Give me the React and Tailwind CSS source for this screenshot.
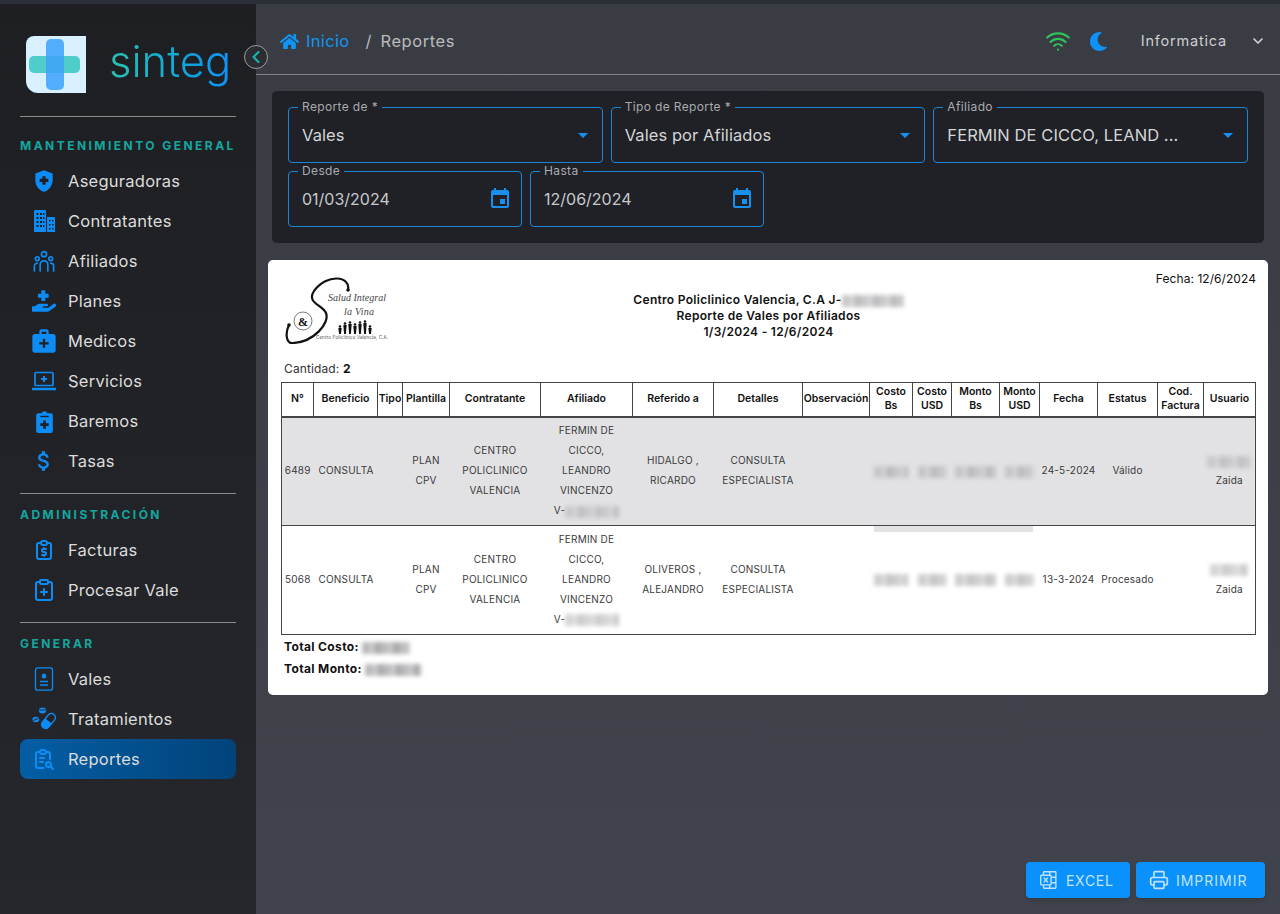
import { ChevronDown, ChevronLeft, ClipboardPlus, Printer, Wifi } from 'lucide-react';
import { FaHandHoldingMedical, FaHome, FaMoon } from 'react-icons/fa';
import { MdArrowDropDown, MdAttachMoney, MdEvent, MdHealthAndSafety, MdMedicalServices } from 'react-icons/md';
import { PiMicrosoftExcelLogo } from 'react-icons/pi';
import { TbReportMoney, TbReportSearch } from 'react-icons/tb';

const ContratantesIcon = ({ className }) => (
  <svg viewBox="0 0 24 24" className={className} fill="currentColor">
    <path d="M2 2a1 1 0 0 1 1-1h10a1 1 0 0 1 1 1v21H2z" />
    <path d="M15 8h7a1 1 0 0 1 1 1v14h-8z" />
    <path
      d="M4.5 4h2v2h-2zM8 4h2v2H8zM11 4h1.500v2H11zM4.500 8h2v2h-2zM8 8h2v2H8zM11 8h1.500v2H11zM4.500 12h2v2h-2zM8 12h2v2H8zM11 12h1.500v2H11zM4.500 16h2v2h-2zM8 16h2v2H8zM11 16h1.500v2H11zM17 11h1.500v1.500H17zM20 11h1.500v1.500H20zM17 15h1.500v1.500H17zM20 15h1.500v1.500H20zM17 19h1.500v1.500H17zM20 19h1.500v1.500H20z"
      fill="#1f2126"
    />
  </svg>
);

const AfiliadosIcon = ({ className }) => (
  <svg viewBox="0 0 24 24" className={className} fill="none" stroke="currentColor" strokeWidth="1.8" strokeLinecap="round">
    <circle cx="12" cy="4.500" r="2.800" />
    <circle cx="4.700" cy="9.500" r="2.100" />
    <circle cx="19.300" cy="9.500" r="2.100" />
    <path d="M7.800 23v-7a4.200 4.200 0 0 1 8.400 0v7" />
    <path d="M1.500 23v-5.500a3.200 3.200 0 0 1 3.200-3.200" />
    <path d="M22.500 23v-5.500a3.200 3.200 0 0 0-3.200-3.200" />
  </svg>
);

const ServiciosIcon = ({ className }) => (
  <svg viewBox="0 0 24 24" className={className} fill="none" stroke="currentColor" strokeWidth="1.7">
    <rect x="3" y="3.500" width="18" height="13" rx="1" />
    <path d="M12 7v6M9 10h6" strokeWidth="2" />
    <path d="M0.500 20h23" strokeWidth="2.400" strokeLinecap="round" />
  </svg>
);

const BaremosIcon = ({ className }) => (
  <svg viewBox="0 0 24 24" className={className} fill="currentColor">
    <path d="M6 4h3.200a3 3 0 0 1 5.600 0H18a2 2 0 0 1 2 2v15a2 2 0 0 1-2 2H6a2 2 0 0 1-2-2V6a2 2 0 0 1 2-2z" />
    <path d="M8 7.200h8" stroke="#1f2126" strokeWidth="1.400" />
    <path d="M12 11v8M8 15h8" stroke="#1f2126" strokeWidth="2.600" />
  </svg>
);

const ValesIcon = ({ className }) => (
  <svg viewBox="0 0 24 24" className={className} fill="none" stroke="currentColor" strokeWidth="1.300">
    <rect x="3.500" y="0.800" width="17" height="22.400" rx="2.200" />
    <path d="M12 6.500v5M9.800 7.700l4.400 2.600M14.200 7.700l-4.400 2.600" strokeWidth="1.500" />
    <path d="M8 14.500h8M8 18h8" strokeWidth="1.500" />
  </svg>
);

const PillsIcon = ({ className }) => (
  <svg viewBox="0 0 24 24" className={className} fill="currentColor">
    <g transform="rotate(-50 16.500 14)">
      <rect x="8" y="10" width="17" height="8" rx="4" fill="none" stroke="currentColor" strokeWidth="1.400" />
      <path d="M16.500 10H12a4 4 0 0 0 0 8h4.500z" />
    </g>
    <ellipse cx="10.500" cy="3.500" rx="3.600" ry="3" />
    <path d="M7.300 3h6.400" stroke="#1f2126" strokeWidth="0.900" />
    <ellipse cx="3.800" cy="12.500" rx="3.400" ry="2.800" />
    <path d="M1 13.500l5.500-2" stroke="#1f2126" strokeWidth="0.900" />
  </svg>
);

const Logo = () => (
  <svg viewBox="0 0 60 57" className="w-[60px] h-[57px] shrink-0">
    <path d="M8 0h52v57H12a12 12 0 0 1-12-12V8a8 8 0 0 1 8-8z" fill="#d8f0ff" />
    <rect x="20" y="3" width="18" height="51" rx="5" fill="#52adfd" />
    <rect x="3" y="20" width="51" height="17" rx="5" fill="#4fcdcb" />
    <rect x="20" y="20" width="18" height="17" fill="#3fa8f0" />
  </svg>
);

const Person = ({ x, h }) => (
  <g fill="#111">
    <circle cx={x} cy={56.500 - h} r="1.300" />
    <path d={`M${x - 1.700} ${58 - h}h3.400l-0.800 ${h}h-1.800z`} />
  </g>
);

const ReportLogo = () => (
  <svg viewBox="0 0 103 68" className="w-[103px] h-[68px]">
    <path d="M63 14C66 0 42-3 29 15c-8 12 9 14 12 22 4 10-12 29-33 30C1 68 0 57 4 49" fill="none" stroke="#111" strokeWidth="2.200" />
    <circle cx="63" cy="14" r="1.800" fill="#111" />
    <circle cx="4" cy="49" r="1.800" fill="#111" />
    <circle cx="18" cy="45" r="9" fill="none" stroke="#222" strokeWidth="0.600" />
    <text x="18" y="49.500" textAnchor="middle" fontSize="12" fontWeight="700" fill="#111" fontFamily="Liberation Serif, serif">&amp;</text>
    <text x="43" y="25" fontSize="10" fontStyle="italic" fill="#444" fontFamily="Liberation Serif, serif" textLength="58">Salud Integral</text>
    <text x="59" y="39" fontSize="10" fontStyle="italic" fill="#444" fontFamily="Liberation Serif, serif" textLength="30">la Vina</text>
    {[[55, 6], [60, 9], [65, 10], [70, 8], [75, 10], [80, 11], [85, 6]].map(([x, h]) => (
      <Person key={x} x={x} h={h} />
    ))}
    <text x="31" y="63" fontSize="4.400" fill="#444" fontFamily="Inter, sans-serif" textLength="72">Centro Policlinico Valencia, C.A.</text>
  </svg>
);

const sections = [
  {
    title: 'MANTENIMIENTO GENERAL',
    items: [
      { label: 'Aseguradoras', icon: MdHealthAndSafety, size: 'w-[26px] h-[26px]' },
      { label: 'Contratantes', icon: ContratantesIcon, size: 'w-[24px] h-[24px]' },
      { label: 'Afiliados', icon: AfiliadosIcon, size: 'w-[22px] h-[22px]' },
      { label: 'Planes', icon: FaHandHoldingMedical, size: 'w-[24px] h-[24px]' },
      { label: 'Medicos', icon: MdMedicalServices, size: 'w-[28px] h-[28px]' },
      { label: 'Servicios', icon: ServiciosIcon, size: 'w-[24px] h-[24px]' },
      { label: 'Baremos', icon: BaremosIcon, size: 'w-[25px] h-[25px]' },
      { label: 'Tasas', icon: MdAttachMoney, size: 'w-[26px] h-[26px]' },
    ],
  },
  {
    title: 'ADMINISTRACIÓN',
    items: [
      { label: 'Facturas', icon: TbReportMoney, size: 'w-[24px] h-[24px]' },
      { label: 'Procesar Vale', icon: ClipboardPlus, size: 'w-[24px] h-[24px]' },
    ],
  },
  {
    title: 'GENERAR',
    items: [
      { label: 'Vales', icon: ValesIcon, size: 'w-[24px] h-[24px]' },
      { label: 'Tratamientos', icon: PillsIcon, size: 'w-[24px] h-[24px]' },
      { label: 'Reportes', icon: TbReportSearch, size: 'w-[24px] h-[24px]', active: true },
    ],
  },
];

const Sidebar = () => (
  <aside className="w-[256px] shrink-0 px-5 bg-gradient-to-b from-[#1e1f23] to-[#25272c]">
    <div className="flex items-center h-[113px] pl-[6px] pt-[8px] border-b border-[#8b8b8b]">
      <Logo />
      <span className="ml-[23px] pb-[4px] text-[43.500px] leading-none font-light text-transparent bg-clip-text bg-gradient-to-r from-[#2cc0ae] to-[#1190f5]">
        sinteg
      </span>
    </div>
    {sections.map((section, i) => (
      <div key={section.title} className={i < 2 ? 'border-b border-[#8b8b8b] pb-3' : ''}>
        <div className={`${i === 0 ? 'mt-[21px]' : 'mt-[13px]'} mb-[7px] h-4 text-[12px] leading-4 font-bold tracking-[0.205em] text-[#14a79f]`}>
          {section.title}
        </div>
        {section.items.map((item) => (
          <div
            key={item.label}
            className={`flex items-center h-10 rounded-lg ${item.active ? 'bg-gradient-to-r from-[#045ea4] to-[#02437a]' : ''}`}
          >
            <span className="w-[48px] flex justify-center text-[#0d8cf5]">
              <item.icon className={item.size} />
            </span>
            <span className="text-[16.500px] tracking-[0.015em] text-[#dcdcdc]">{item.label}</span>
          </div>
        ))}
      </div>
    ))}
  </aside>
);

const Field = ({ label, children }) => (
  <div className="relative h-14 flex items-center justify-between pl-[13px] pr-[12px] border border-[#1a86d8] rounded-[4px]">
    <span className="absolute -top-[8px] left-[9px] px-[4px] bg-[#1f2126] text-[12px] leading-[14px] tracking-[0.03em] text-[#a9abae]">
      {label}
    </span>
    {children}
  </div>
);

const SelectField = ({ label, value }) => (
  <Field label={label}>
    <span className="text-[16.500px] tracking-[0.005em] text-[#d4d5d7] whitespace-nowrap">{value}</span>
    <MdArrowDropDown className="w-6 h-6 -mr-[5px] text-[#1a90ee]" />
  </Field>
);

const DateField = ({ label, value }) => (
  <Field label={label}>
    <span className="text-[16px] text-[#c8c9cc]">{value}</span>
    <MdEvent className="w-[24px] h-[24px] -mr-[3px] text-[#1a90ee]" />
  </Field>
);

const Blur = ({ w, className = '' }) => (
  <span
    className={`inline-block h-[12px] align-middle blur-[2px] bg-[repeating-linear-gradient(90deg,#b9b9bb_0px,#b9b9bb_7px,#c8c8ca_7px,#c8c8ca_13px,#a9a9ab_13px,#a9a9ab_18px)] ${className}`}
    style={{ width: w }}
  />
);

const headers = [
  ['N°', 'w-[32px]'],
  ['Beneficio', 'w-[64px]'],
  ['Tipo', 'w-[25px]'],
  ['Plantilla', 'w-[47px]'],
  ['Contratante', 'w-[91px]'],
  ['Afiliado', 'w-[92px]'],
  ['Referido a', 'w-[81px]'],
  ['Detalles', 'w-[89px]'],
  ['Observación', 'w-[67px]'],
  ['Costo Bs', 'w-[43px]'],
  ['Costo USD', 'w-[39px]'],
  ['Monto Bs', 'w-[48px]'],
  ['Monto USD', 'w-[40px]'],
  ['Fecha', 'w-[58px]'],
  ['Estatus', 'w-[60px]'],
  ['Cod. Factura', 'w-[46px]'],
  ['Usuario', 'w-[52px]'],
];

const rows = [
  {
    id: '6489', refer: ['HIDALGO ,', 'RICARDO'], fecha: '24-5-2024', estatus: 'Válido', shade: true,
    blurs: [34, 29, 41, 29], user: 44,
  },
  {
    id: '5068', refer: ['OLIVEROS ,', 'ALEJANDRO'], fecha: '13-3-2024', estatus: 'Procesado', shade: false,
    blurs: [34, 29, 41, 29], user: 38,
  },
];

const Lines = ({ lines }) => lines.map((line) => <div key={line}>{line}</div>);

const ReportTable = () => (
  <div className="relative">
    <table className="table-fixed border-collapse w-[974px] text-[10px] leading-[20px] tracking-[0.02em] text-[#3a3a3a] text-center">
      <thead>
        <tr className="h-[34px] border-b-2 border-[#444]">
          {headers.map(([name, width]) => (
            <th key={name} className={`${width} border border-[#444] p-0 text-[10.500px] leading-[14px] tracking-normal font-semibold text-[#111]`}>
              {name}
            </th>
          ))}
        </tr>
      </thead>
      <tbody>
        {rows.map((row) => (
          <tr key={row.id} className={`h-[109px] border border-[#444] [&>td]:pb-[2px] ${row.shade ? 'bg-[#e2e2e4]' : ''}`}>
            <td>{row.id}</td>
            <td className="text-left pl-[5px]">CONSULTA</td>
            <td />
            <td><Lines lines={['PLAN', 'CPV']} /></td>
            <td><Lines lines={['CENTRO', 'POLICLINICO', 'VALENCIA']} /></td>
            <td>
              <Lines lines={['FERMIN DE', 'CICCO,', 'LEANDRO', 'VINCENZO']} />
              <div>V-<Blur w={54} className="opacity-60" /></div>
            </td>
            <td><Lines lines={row.refer} /></td>
            <td><Lines lines={['CONSULTA', 'ESPECIALISTA']} /></td>
            <td />
            {row.blurs.map((w, i) => (
              <td key={i} className="overflow-hidden"><Blur w={w} className="opacity-70" /></td>
            ))}
            <td className="whitespace-nowrap">{row.fecha}</td>
            <td className="whitespace-nowrap">{row.estatus}</td>
            <td />
            <td>
              <div><Blur w={row.user} className="opacity-60" /></div>
              <div>Zaida</div>
            </td>
          </tr>
        ))}
      </tbody>
    </table>
    <div className="absolute left-[593px] top-[144px] w-[159px] h-[6px] bg-[#e2e2e4]" />
  </div>
);

const Report = () => (
  <section className="mx-3 mt-[17px] h-[435px] bg-white rounded-[5px] pl-[13px] pr-3 pt-[16px] text-[#111]">
    <div className="grid grid-cols-[1fr_auto_1fr] h-[86px]">
      <div className="pl-[4px]"><ReportLogo /></div>
      <div className="pt-[16px] text-center text-[12px] leading-[16px] font-semibold tracking-[0.025em]">
        <div>
          Centro Policlinico Valencia, C.A J-<Blur w={62} className="opacity-80" />
        </div>
        <div>Reporte de Vales por Afiliados</div>
        <div>1/3/2024 - 12/6/2024</div>
      </div>
      <div className="-mt-[4px] text-right text-[12px] leading-[14px] tracking-[0.005em]">Fecha: 12/6/2024</div>
    </div>
    <div className="h-[20px] pl-[3px] text-[12px] leading-[14px] tracking-[0.01em] text-[#333]">
      Cantidad: <b className="text-[#111]">2</b>
    </div>
    <ReportTable />
    <div className="pl-[3px] pt-[1px] text-[12px] leading-[22px] font-bold tracking-[0.03em]">
      <div>Total Costo: <Blur w={48} /></div>
      <div>Total Monto: <Blur w={56} /></div>
    </div>
  </section>
);

const App = () => (
  <div className="flex flex-col h-[914px] overflow-hidden [font-family:Inter,sans-serif]">
    <div className="h-1 bg-[#2b3038]" />
    <div className="relative flex flex-1 min-h-0">
      <Sidebar />
      <button className="absolute left-[244px] top-[41px] w-6 h-6 flex items-center justify-center rounded-full border border-[#9b9d9f] bg-[#2b2d33] text-[#18b6ad]">
        <ChevronLeft className="w-5 h-5" strokeWidth={2.5} />
      </button>
      <main className="flex-1 flex flex-col min-w-0 bg-gradient-to-b from-[#393c43] to-[#41434c]">
        <header className="h-[71px] shrink-0 flex items-center pt-[4px] pl-6 pr-[14px] border-b border-[#85878a]">
          <FaHome className="w-[19px] h-[19px] text-[#1195f5]" />
          <span className="ml-[7px] text-[16.500px] tracking-[0.02em] text-[#1195f5]">Inicio</span>
          <span className="ml-[16px] text-[16.500px] text-[#b9bbbe]">/</span>
          <span className="ml-[9px] text-[16.500px] tracking-[0.035em] text-[#b9bbbe]">Reportes</span>
          <Wifi className="ml-auto w-[26px] h-[26px] text-[#2fc25b]" strokeWidth={2} />
          <FaMoon className="ml-[18px] w-[19px] h-[19px] text-[#0d92f8]" />
          <span className="ml-[33px] text-[14.500px] tracking-[0.055em] text-[#cdced0]">Informatica</span>
          <ChevronDown className="ml-[23px] w-[16px] h-[16px] text-[#d4d5d7]" strokeWidth={2.5} />
        </header>

        <section className="mx-4 mt-4 p-4 flex flex-col gap-2 rounded-[5px] bg-[#1f2126]">
          <div className="grid grid-cols-3 gap-2">
            <SelectField label="Reporte de *" value="Vales" />
            <SelectField label="Tipo de Reporte *" value="Vales por Afiliados" />
            <SelectField label="Afiliado" value="FERMIN DE CICCO, LEAND ..." />
          </div>
          <div className="grid grid-cols-4 gap-2">
            <DateField label="Desde" value="01/03/2024" />
            <DateField label="Hasta" value="12/06/2024" />
          </div>
        </section>

        <Report />

        <div className="mt-auto mb-[16px] mr-[15px] flex justify-end gap-[6px]">
          <button className="h-9 w-[104px] pl-[12px] flex items-center gap-[6px] rounded-[4px] bg-[#0a91fb] text-[14px] tracking-[0.05em] text-[#bfe3fd] shadow-md">
            <PiMicrosoftExcelLogo className="w-[22px] h-[22px]" />
            EXCEL
          </button>
          <button className="h-9 w-[129px] pl-[13px] flex items-center gap-[7px] rounded-[4px] bg-[#0a91fb] text-[14px] tracking-[0.07em] text-[#bfe3fd] shadow-md">
            <Printer className="w-[20px] h-[20px]" />
            IMPRIMIR
          </button>
        </div>
      </main>
    </div>
  </div>
);

export default App;
